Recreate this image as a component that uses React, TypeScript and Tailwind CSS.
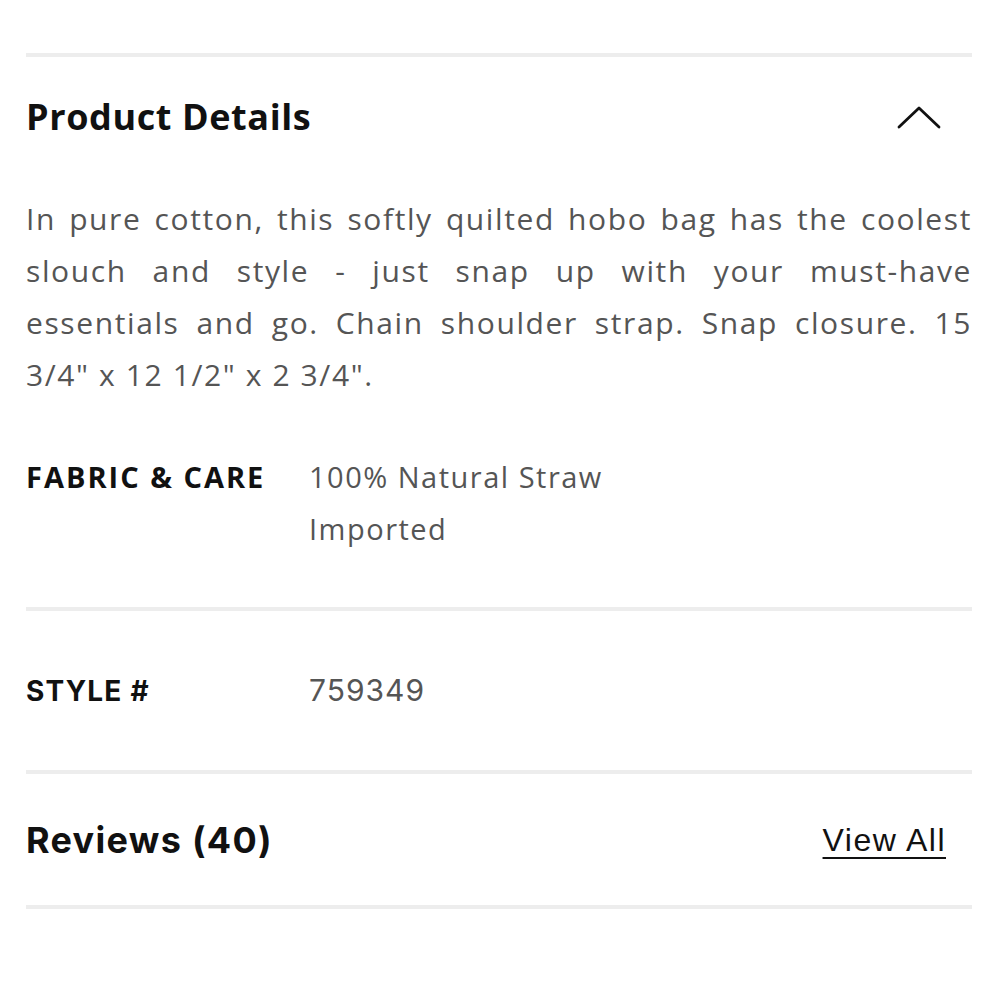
import React from 'react';

const Divider = () => <div className="h-[4px] w-full bg-[#ededed]" />;

const ChevronUp = () => (
  <svg width="44" height="24" viewBox="0 0 44 24" fill="none" className="mr-[31px]">
    <path d="M2 22 L22 3 L42 22" stroke="#111" strokeWidth="2.8" strokeLinecap="round" strokeLinejoin="round" />
  </svg>
);

export default function App() {
  return (
    <div className="min-h-screen w-[1000px] bg-white pl-[26px] pr-[28px] pt-[53px] font-['Open_Sans',sans-serif]">
      <Divider />

      {/* Product details */}
      <div className="flex h-[120px] items-center justify-between">
        <h2 className="text-[36px] font-bold tracking-[0.6px] text-[#111]">Product Details</h2>
        <ChevronUp />
      </div>

      <p className="mt-[16px] text-justify text-[30px] leading-[52px] tracking-[1.6px] text-[#555]">
        In pure cotton, this softly quilted hobo bag has the coolest slouch and style - just snap up
        with your must-have essentials and go. Chain shoulder strap. Snap closure. 15 3/4" x 12 1/2" x 2 3/4".
      </p>

      <div className="mt-[50px] mb-[52px] flex leading-[52px]">
        <div className="w-[283px] text-[29px] font-bold tracking-[2px] text-[#111]">FABRIC &amp; CARE</div>
        <div className="text-[29px] tracking-[1.5px] text-[#555]">
          <div>100% Natural Straw</div>
          <div>Imported</div>
        </div>
      </div>

      <Divider />

      <div className="flex h-[159px] items-center font-['Inter',sans-serif]">
        <div className="w-[283px] text-[28px] font-bold tracking-[1.2px] text-[#111]">STYLE #</div>
        <div className="text-[30px] tracking-[1px] text-[#555]">759349</div>
      </div>

      <Divider />

      <div className="flex h-[131px] items-center justify-between">
        <h2 className="font-['Inter',sans-serif] text-[36px] font-bold tracking-[1.3px] text-[#111]">Reviews (40)</h2>
        <a className="mr-[26px] font-['Liberation_Sans',sans-serif] text-[32px] tracking-[1.5px] text-[#111] underline decoration-2 underline-offset-[6px]">
          View All
        </a>
      </div>

      <Divider />
    </div>
  );
}
